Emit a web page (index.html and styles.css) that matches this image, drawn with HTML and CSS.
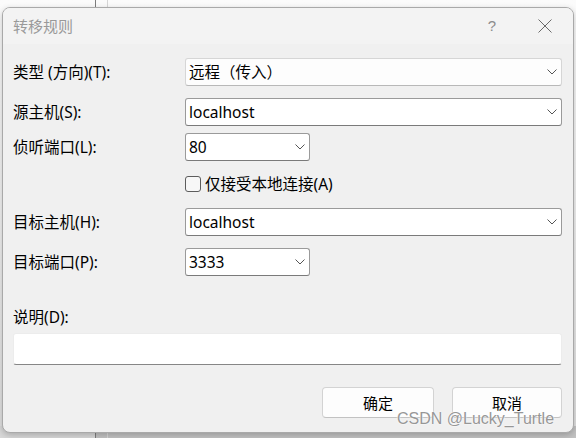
FILE: index.html
```html
<!DOCTYPE html>
<html lang="zh-CN">
<head>
<meta charset="utf-8">
<title>转移规则</title>
<link rel="stylesheet" href="styles.css">
</head>
<body>
<div class="screen">
  <div class="dialog">
    <div class="titlebar">
      <span class="title">转移规则</span>
      <span class="help">?</span>
      <span class="close">
        <svg width="14" height="14" viewBox="0 0 14 14"><path d="M0.5 0.5 L13.5 13.5 M13.5 0.5 L0.5 13.5" stroke="#6a6a6a" stroke-width="1" fill="none"/></svg>
      </span>
    </div>
    <div class="body">
      <div class="row">
        <span class="label">类型 (方向)(T):</span>
        <div class="combo combo-static long">
          <span class="value">远程（传入）</span>
          <svg class="chev" width="10" height="6" viewBox="0 0 10 6"><path d="M0.5 0.5 L5 5 L9.5 0.5" fill="none" stroke="#555" stroke-width="1"/></svg>
        </div>
      </div>
      <div class="row gap12">
        <span class="label">源主机(S):</span>
        <div class="combo combo-edit long">
          <span class="value">localhost</span>
          <svg class="chev" width="10" height="6" viewBox="0 0 10 6"><path d="M0.5 0.5 L5 5 L9.5 0.5" fill="none" stroke="#555" stroke-width="1"/></svg>
        </div>
      </div>
      <div class="row gap7">
        <span class="label">侦听端口(L):</span>
        <div class="combo combo-edit short">
          <span class="value">80</span>
          <svg class="chev" width="10" height="6" viewBox="0 0 10 6"><path d="M0.5 0.5 L5 5 L9.5 0.5" fill="none" stroke="#555" stroke-width="1"/></svg>
        </div>
      </div>
      <div class="check-row">
        <span class="checkbox"></span>
        <span class="check-label">仅接受本地连接(A)</span>
      </div>
      <div class="row gap16">
        <span class="label">目标主机(H):</span>
        <div class="combo combo-edit long">
          <span class="value">localhost</span>
          <svg class="chev" width="10" height="6" viewBox="0 0 10 6"><path d="M0.5 0.5 L5 5 L9.5 0.5" fill="none" stroke="#555" stroke-width="1"/></svg>
        </div>
      </div>
      <div class="row gap12">
        <span class="label">目标端口(P):</span>
        <div class="combo combo-edit short">
          <span class="value">3333</span>
          <svg class="chev" width="10" height="6" viewBox="0 0 10 6"><path d="M0.5 0.5 L5 5 L9.5 0.5" fill="none" stroke="#555" stroke-width="1"/></svg>
        </div>
      </div>
      <div class="desc-label">说明(D):</div>
      <div class="desc-field"></div>
      <div class="buttons">
        <button class="btn btn-ok">确定</button>
        <button class="btn btn-cancel">取消</button>
      </div>
    </div>
  </div>
  <div class="watermark">CSDN @Lucky_Turtle</div>
</div>
</body>
</html>
```

FILE: styles.css
```css
* { box-sizing: border-box; }

html, body {
  margin: 0;
  padding: 0;
}

body {
  font-family: "Noto Sans", "Noto Sans CJK SC", sans-serif;
  font-size: 15.5px;
  color: #000;
}

.screen {
  position: relative;
  width: 576px;
  height: 438px;
  overflow: hidden;
  padding-top: 7px;
  padding-left: 2px;
  background:
    linear-gradient(to right, transparent 95px, #7d7d7d 95px, #7d7d7d 96px, transparent 96px),
    linear-gradient(to right, transparent 107px, #d6d6d6 107px, #d6d6d6 108px, transparent 108px),
    linear-gradient(to right, #d8d8d8 95px, #c2c2c2 96px) left bottom / 100% 12px no-repeat,
    linear-gradient(to bottom, #fbfbfb 0, #f2f2f2 200px, #e0e0e0 420px);
}

.dialog {
  width: 572px;
  height: 426px;
  border: 1px solid #a9a9a9;
  border-radius: 8px;
  background: #f0f0f0;
  box-shadow: 0 2px 6px rgba(0, 0, 0, 0.22);
  display: flex;
  flex-direction: column;
  overflow: hidden;
}

.titlebar {
  height: 36px;
  flex: none;
  display: flex;
  align-items: center;
  background: #f3f3f3;
  padding-left: 10px;
  padding-right: 8px;
}

.title {
  flex: 1;
  color: #999;
  font-size: 15px;
  line-height: 20px;
}

.help {
  width: 20px;
  text-align: center;
  color: #8c8c8c;
  font-family: "Liberation Sans", sans-serif;
  font-size: 15px;
  line-height: 20px;
}

.close {
  width: 41px;
  margin-left: 22px;
  display: flex;
  justify-content: center;
  align-items: center;
}

.close svg { display: block; }

.body {
  flex: 1;
  display: flex;
  flex-direction: column;
  padding: 14px 11px 14px 10px;
}

.row {
  display: flex;
  align-items: center;
  height: 28px;
  flex: none;
}

.gap7 { margin-top: 7px; }
.gap12 { margin-top: 12px; }
.gap16 { margin-top: 16px; }

.label {
  width: 172px;
  flex: none;
  line-height: 20px;
  white-space: nowrap;
}

.combo {
  height: 28px;
  display: flex;
  align-items: center;
  padding-left: 3px;
  border-radius: 3px;
  background: #fff;
}

.combo .value {
  line-height: 20px;
  white-space: nowrap;
}

.combo .chev {
  display: block;
  margin-left: auto;
  margin-right: 4px;
}

.long { width: 377px; }
.short { width: 125px; }

.combo-static {
  background: #fdfdfd;
  border: 1px solid #d6d6d6;
  border-bottom-color: #b8b8b8;
}

.combo-edit {
  border: 1px solid #9a9a9a;
  border-bottom-color: #7a7a7a;
}

.check-row {
  margin-top: 15px;
  margin-left: 172px;
  height: 16px;
  display: flex;
  align-items: center;
  gap: 4px;
}

.checkbox {
  width: 16px;
  height: 16px;
  flex: none;
  border: 1px solid #5c5c5c;
  border-radius: 3px;
  background: #f7f7f7;
}

.check-label {
  line-height: 20px;
  white-space: nowrap;
}

.desc-label {
  margin-top: 30px;
  height: 22px;
  line-height: 22px;
}

.desc-field {
  margin-top: 5px;
  height: 32px;
  background: #fff;
  border: 1px solid #ececec;
  border-bottom-color: #868686;
  border-radius: 3px;
}

.buttons {
  margin-top: 22px;
  display: flex;
  justify-content: flex-end;
  gap: 18px;
}

.btn {
  height: 31px;
  font-family: "Noto Sans CJK SC", sans-serif;
  font-size: 15px;
  color: #000;
  background: #fdfdfd;
  border: 1px solid #d3d3d3;
  border-bottom-color: #c2c2c2;
  border-radius: 4px;
  padding: 0;
}

.btn-ok { width: 112px; }
.btn-cancel { width: 110px; }

.watermark {
  position: absolute;
  left: 397px;
  top: 409px;
  font-family: "Liberation Sans", sans-serif;
  font-size: 16px;
  line-height: 20px;
  color: #979797;
  text-shadow: 0 0 1px #fff, 0 0 2px #fff;
  white-space: nowrap;
}
```
